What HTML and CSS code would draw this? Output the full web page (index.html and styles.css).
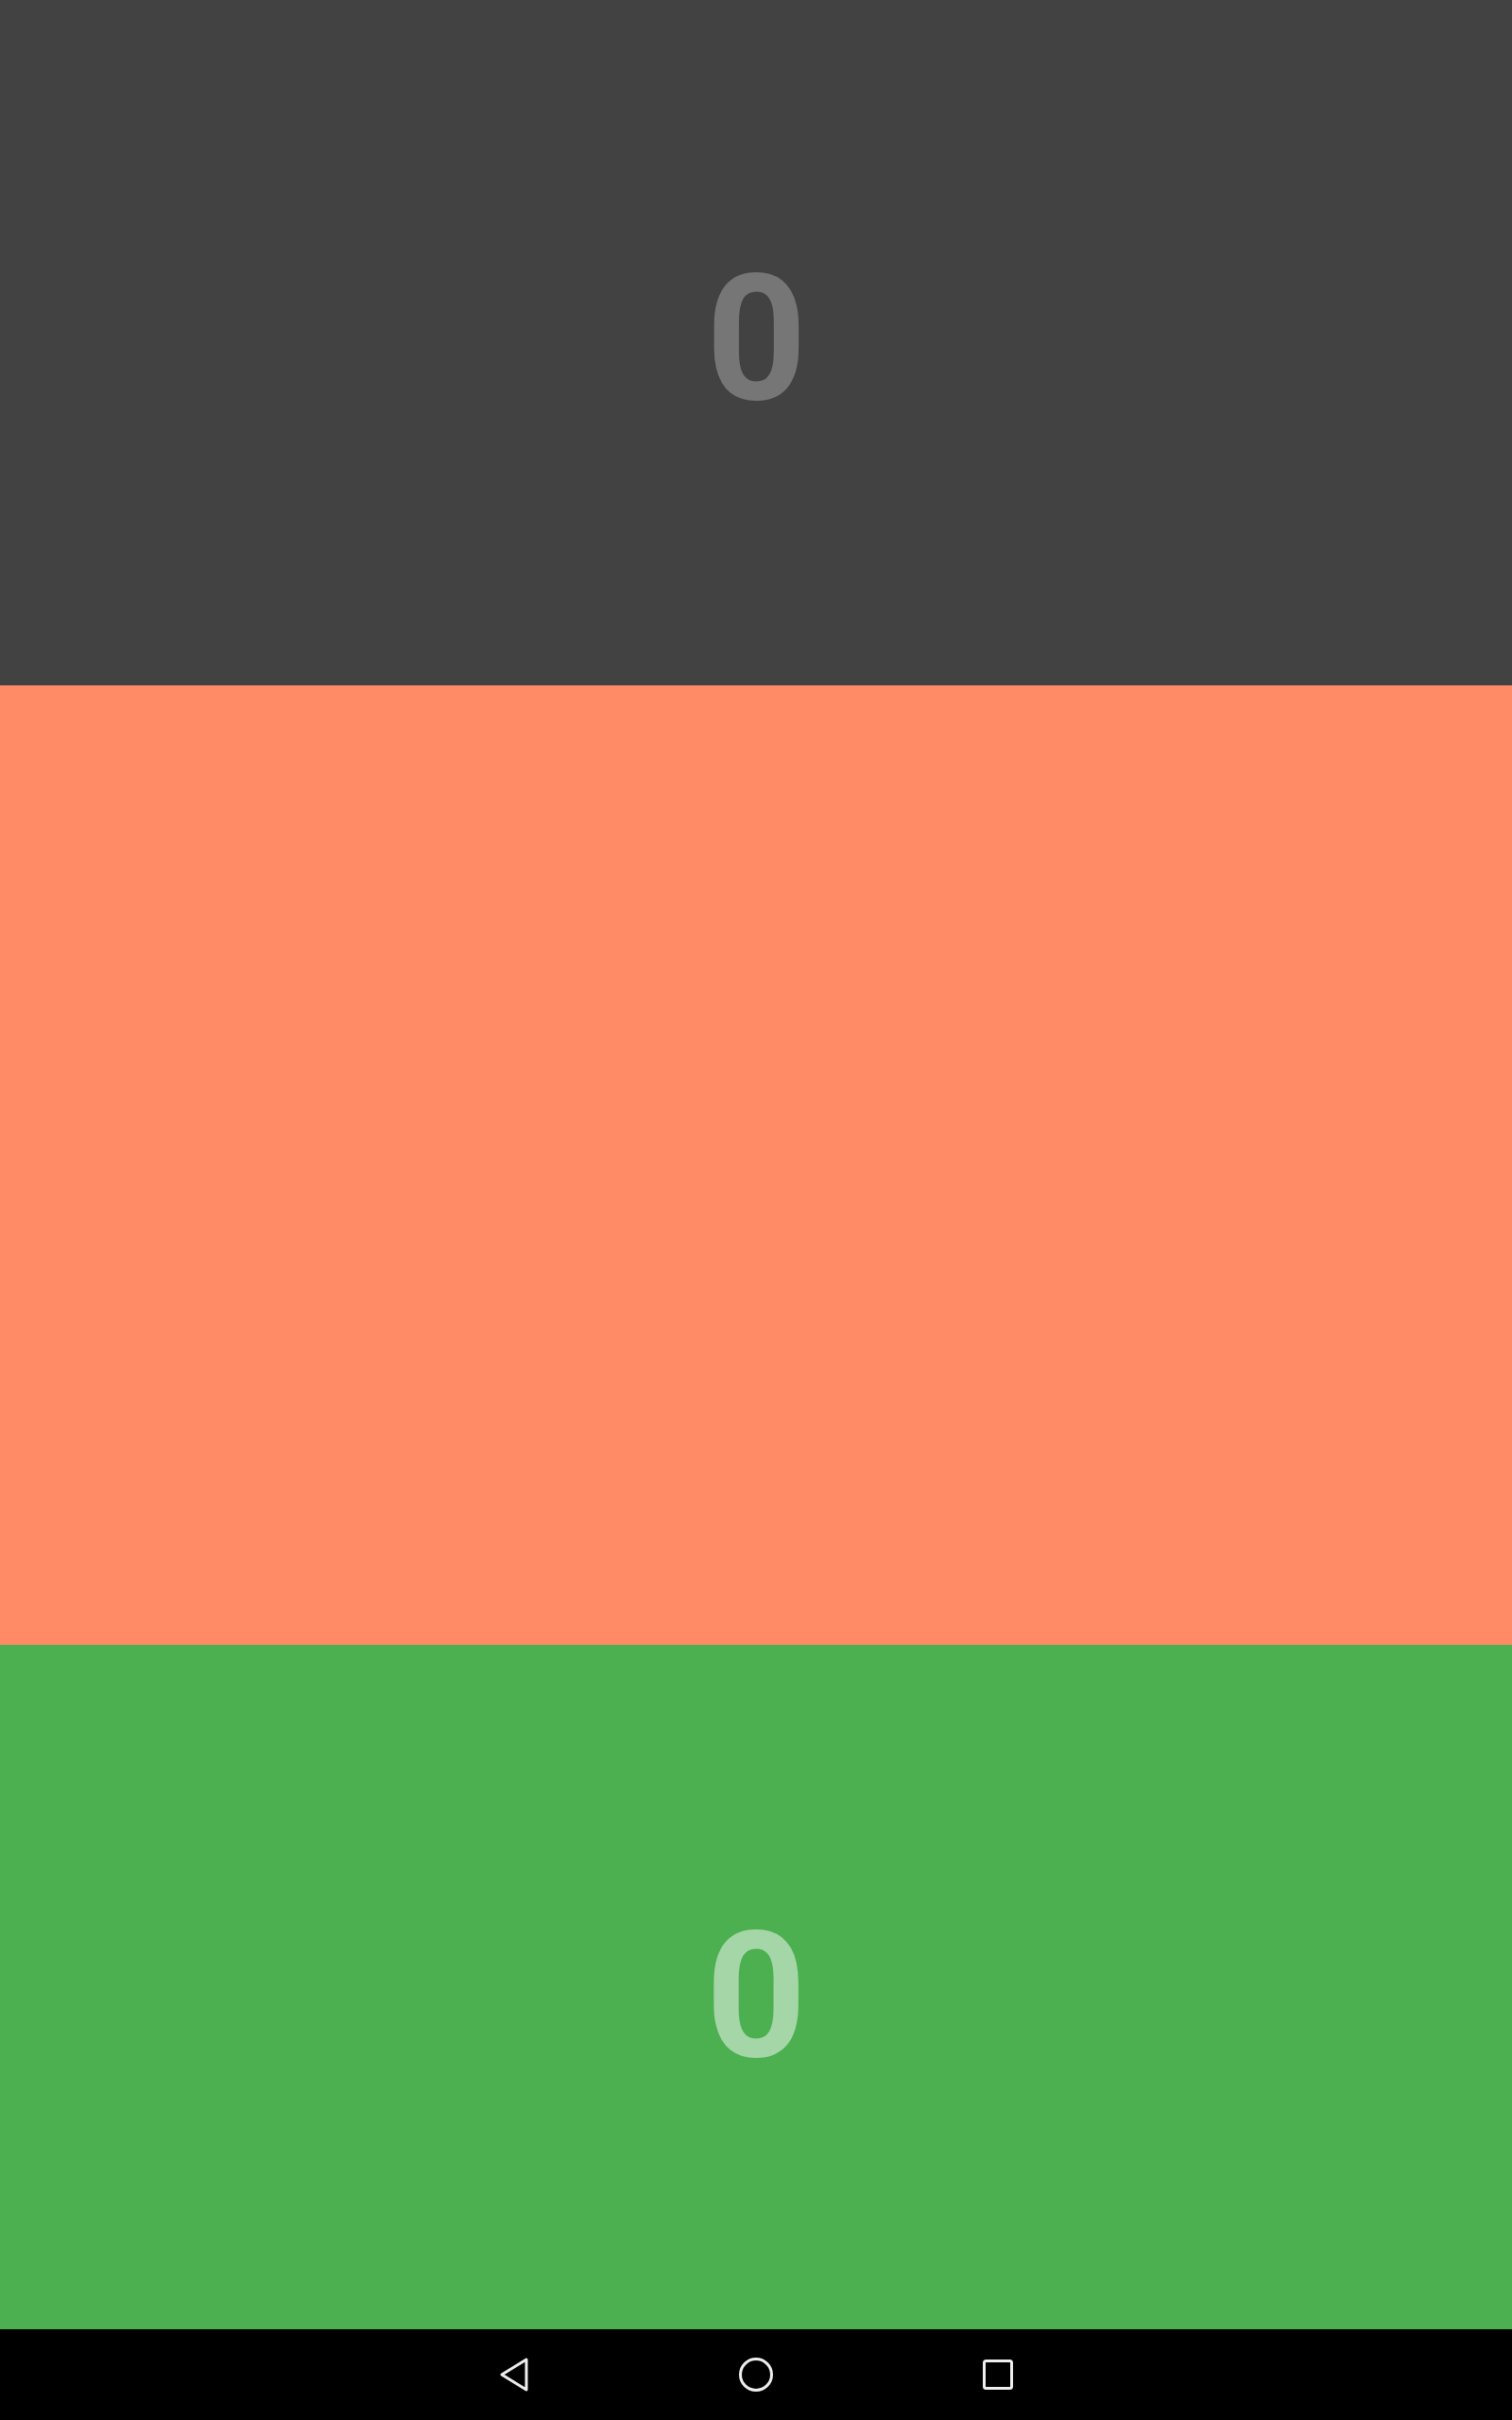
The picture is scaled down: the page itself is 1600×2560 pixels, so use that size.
FILE: index.html
```html
<!DOCTYPE html>
<html>
<head>
<meta charset="utf-8">
<link rel="stylesheet" href="styles.css">
</head>
<body>
<div class="screen">
  <section class="panel panel-top">
    <div class="counter counter-dark flipped">0</div>
  </section>
  <section class="panel panel-mid"></section>
  <section class="panel panel-bottom">
    <div class="counter counter-green">0</div>
  </section>
  <nav class="navbar">
    <div class="navbtn">
      <svg width="40" height="40" viewBox="0 0 40 40"><path d="M33 4 L7 20 L33 36 Z" fill="none" stroke="#eeeeee" stroke-width="3" stroke-linejoin="round"/></svg>
    </div>
    <div class="navbtn">
      <svg width="40" height="40" viewBox="0 0 40 40"><circle cx="20" cy="20" r="16.5" fill="none" stroke="#eeeeee" stroke-width="3"/></svg>
    </div>
    <div class="navbtn">
      <svg width="40" height="40" viewBox="0 0 40 40"><rect x="5.5" y="5.5" width="29" height="29" rx="2" fill="none" stroke="#eeeeee" stroke-width="3"/></svg>
    </div>
  </nav>
</div>
</body>
</html>
```
FILE: styles.css
```css
html, body {
  margin: 0;
  padding: 0;
  background: #000;
}
.screen {
  width: 1600px;
  height: 2560px;
  display: flex;
  flex-direction: column;
}
.panel {
  display: flex;
  align-items: center;
  justify-content: center;
}
.panel-top {
  height: 725px;
  background: #424242;
}
.panel-mid {
  height: 1015px;
  background: #ff8a65;
}
.panel-bottom {
  height: 724px;
  background: #4caf50;
}
.counter {
  font-family: Roboto, "Liberation Sans", sans-serif;
  font-weight: 700;
  font-size: 186px;
  line-height: normal;
  padding-top: 17px;
}
.counter-dark {
  color: #767676;
}
.counter-green {
  color: #a5d6a7;
}
.flipped {
  transform: rotate(180deg);
}
.navbar {
  height: 96px;
  background: #000;
  display: flex;
  justify-content: center;
  align-items: center;
}
.navbtn {
  width: 256px;
  height: 96px;
  display: flex;
  align-items: center;
  justify-content: center;
}
.navbtn svg {
  display: block;
}
```
